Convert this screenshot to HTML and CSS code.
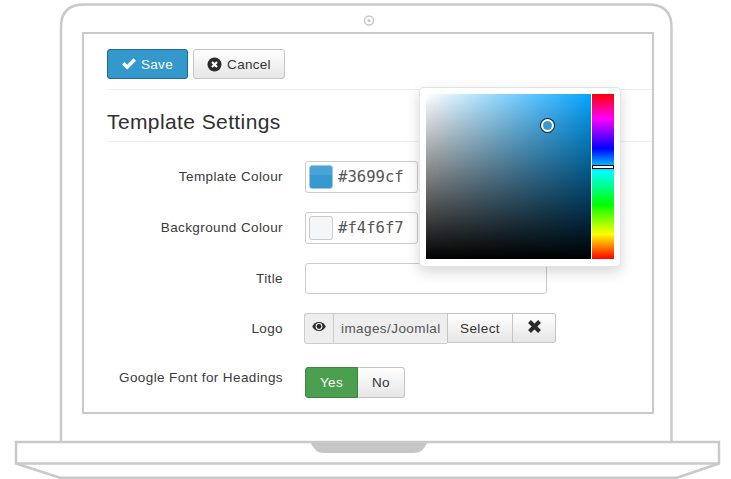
FILE: index.html
```html
<!DOCTYPE html>
<html lang="en">
<head>
<meta charset="utf-8">
<title>Template Settings</title>
<link rel="stylesheet" href="styles.css">
</head>
<body>
<div class="laptop">
  <svg class="outline" width="731" height="479" viewBox="0 0 731 479" aria-hidden="true">
    <path class="line" d="M61 442V27Q61 4.500 84 4.500H648Q671.500 4.500 671.500 27V442"/>
    <circle class="line thin" cx="369" cy="20.500" r="4.500"/>
    <circle class="dot" cx="369" cy="20.500" r="1.500"/>
    <path class="line" d="M16 442H719V463.500H16Z"/>
    <path class="line" d="M16 463.500L60 477.800H677L719 463.500"/>
    <path class="dot" d="M311 443H427Q423 453 414 453H324Q315 453 311 443Z"/>
  </svg>
  <main class="screen">
    <div class="toolbar">
      <button class="btn btn-primary" type="button">
        <svg class="icon" width="16" height="14" viewBox="0 0 16 14"><path class="fill-white" d="M1 7.500L3.500 5L6.200 7.700L12.500 1.200L15 3.700L6.200 12.600Z"/></svg>
        Save
      </button>
      <button class="btn" type="button">
        <svg class="icon" width="15" height="15" viewBox="0 0 15 15"><circle class="fill-dark" cx="7.500" cy="7.500" r="7"/><path class="cross" d="M5 5L10 10M10 5L5 10"/></svg>
        Cancel
      </button>
    </div>
    <h1 class="title">Template Settings</h1>
    <form class="form">
      <label class="label">Template Colour</label>
      <div class="colour">
        <span class="swatch swatch-blue"></span><span class="hex">#3699cf</span>
      </div>
      <label class="label">Background Colour</label>
      <div class="colour">
        <span class="swatch swatch-light"></span><span class="hex">#f4f6f7</span>
      </div>
      <label class="label label-low">Title</label>
      <div class="text-input"></div>
      <label class="label label-low">Logo</label>
      <div class="media">
        <span class="addon addon-eye">
          <svg width="14" height="9" viewBox="0 0 15 10"><path class="fill-dark" d="M7.500 0C11 0 13.700 2.300 15 5C13.700 7.700 11 10 7.500 10C4 10 1.300 7.700 0 5C1.300 2.300 4 0 7.500 0Z"/><circle class="fill-white" cx="7.500" cy="5" r="3.800"/><circle class="fill-dark" cx="7.500" cy="5" r="2.700"/></svg>
        </span>
        <span class="addon addon-path">images/Joomlal</span>
        <span class="addon-btn addon-select">Select</span>
        <span class="addon-btn addon-clear">
          <svg width="15" height="15" viewBox="0 0 15 15"><path class="cross-bold" d="M2.500 2.500L12.500 12.500M12.500 2.500L2.500 12.500"/></svg>
        </span>
      </div>
      <label class="label label-switch">Google Font for Headings</label>
      <div class="switch">
        <span class="switch-yes">Yes</span><span class="switch-no">No</span>
      </div>
    </form>
  </main>
  <div class="picker">
    <div class="sat">
      <span class="sat-handle"></span>
    </div>
    <div class="hue">
      <span class="hue-handle"></span>
    </div>
  </div>
</div>
</body>
</html>
```
FILE: styles.css
```css
* { box-sizing: border-box; }
html, body { margin: 0; padding: 0; background: #fff; }
body { font-family: "Liberation Sans", Arial, sans-serif; color: #333; }

.laptop { position: relative; width: 731px; height: 479px; overflow: hidden; padding: 32px 77px 0 82px; }
.outline { position: absolute; left: 0; top: 0; }
.line { fill: none; stroke: #c9c9c9; stroke-width: 2.500; }
.thin { stroke-width: 1.500; }
.dot { fill: #c6c6c6; }

.screen { position: relative; width: 572px; height: 382px; border: 2px solid #c9c9c9; padding: 15px 0 0 23px; background: #fff; }

.toolbar { display: flex; gap: 5px; height: 41px; border-bottom: 1px solid #eee; }
.btn { height: 30px; padding: 0; width: 92px; display: flex; align-items: center; justify-content: center; gap: 5px; font: 13.500px "Liberation Sans", Arial, sans-serif; letter-spacing: 0.300px; color: #333; border: 1px solid #c4c4c4; border-radius: 3px; background: linear-gradient(#fff, #e6e6e6); }
.btn-primary { width: 81px; gap: 4px; padding-right: 1px; color: #fff; background: #3498cd; border-color: #1c6a97; }
.icon { display: block; }
.fill-white { fill: #fff; }
.fill-dark { fill: #2b2b2b; }
.cross { fill: none; stroke: #fff; stroke-width: 2.200; }
.cross-bold { fill: none; stroke: #2b2b2b; stroke-width: 4; }

.title { margin: 0; height: 52px; padding-top: 20px; font-size: 21px; line-height: 24px; font-weight: 400; letter-spacing: 0.400px; color: #2f2f2f; border-bottom: 1px solid #eee; }

.form { display: grid; grid-template-columns: 176px auto; justify-content: start; justify-items: start; align-items: center; column-gap: 22px; row-gap: 19px; padding-top: 19px; font-size: 13.500px; }
.label { justify-self: end; letter-spacing: 0.390px; color: #3a3a3a; margin-top: -2px; }
.label-low { margin-top: 0; }
.label-switch { align-self: start; margin-top: 7px; }

.colour { width: 113px; height: 32px; display: flex; align-items: center; gap: 5px; padding-left: 3px; border: 1px solid #ccc; border-radius: 3px; background: #fff; }
.swatch { width: 24px; height: 24px; border: 1px solid #ccc; border-radius: 3px; }
.swatch-blue { background: linear-gradient(#4aa3d6 0 40%, #3699cf 40%); border-color: #9cc8e0; }
.swatch-light { background: #f4f6f7; }
.hex { font-family: "DejaVu Sans Mono", monospace; font-size: 15.600px; color: #555; }

.text-input { width: 242px; height: 31px; border: 1px solid #ccc; border-radius: 3px; background: #fff; }

.media { display: flex; height: 31px; margin-left: -1px; font-size: 13.500px; letter-spacing: 0.420px; }
.addon { display: flex; align-items: center; border: 1px solid #ccc; border-right: 0; background: #eee; }
.addon-eye { width: 29px; justify-content: center; border-radius: 3px 0 0 3px; padding-bottom: 4px; }
.addon-path { width: 114px; padding-left: 7px; color: #555; white-space: nowrap; }
.addon-btn { display: flex; align-items: center; justify-content: center; border: 1px solid #c4c4c4; background: linear-gradient(#fff, #e6e6e6); height: 30px; color: #333; }
.addon-select { width: 66px; }
.addon-clear { width: 43px; border-left: 0; border-radius: 0 3px 3px 0; padding-bottom: 3px; }

.switch { display: flex; height: 31px; margin-top: 4px; letter-spacing: 0.300px; }
.switch-yes, .switch-no { display: flex; align-items: center; justify-content: center; }
.switch-yes { width: 53px; color: #fff; background: #4aa04e; border: 1px solid #3c8440; border-radius: 3px 0 0 3px; }
.switch-no { width: 47px; border: 1px solid #c4c4c4; border-left: 0; border-radius: 0 3px 3px 0; background: linear-gradient(#fff, #e6e6e6); }

.picker { position: absolute; left: 419px; top: 87px; width: 202px; height: 180px; display: flex; gap: 1px; padding: 6px 5px 6px 6px; background: #fff; border: 1px solid #e4e4e4; border-radius: 5px; box-shadow: 0 5px 14px rgba(0, 0, 0, 0.16); }
.sat { position: relative; width: 165px; height: 165px; background: linear-gradient(to bottom, rgba(0, 0, 0, 0), #000), linear-gradient(to right, #fff, #04a4ff); }
.sat-handle { position: absolute; left: 115px; top: 25px; width: 13px; height: 13px; border-radius: 50%; background: #3699cf; border: 2px solid #fff; box-shadow: 0 0 0 1px #123; }
.hue { position: relative; width: 22px; height: 165px; background: linear-gradient(to bottom, #f00 0%, #f0f 15%, #00f 33%, #0ff 47%, #0f0 67%, #ff0 85%, #f00 100%); }
.hue-handle { position: absolute; left: 0; top: 71px; width: 22px; height: 4px; background: #fff; border: 1px solid #000; }
```
